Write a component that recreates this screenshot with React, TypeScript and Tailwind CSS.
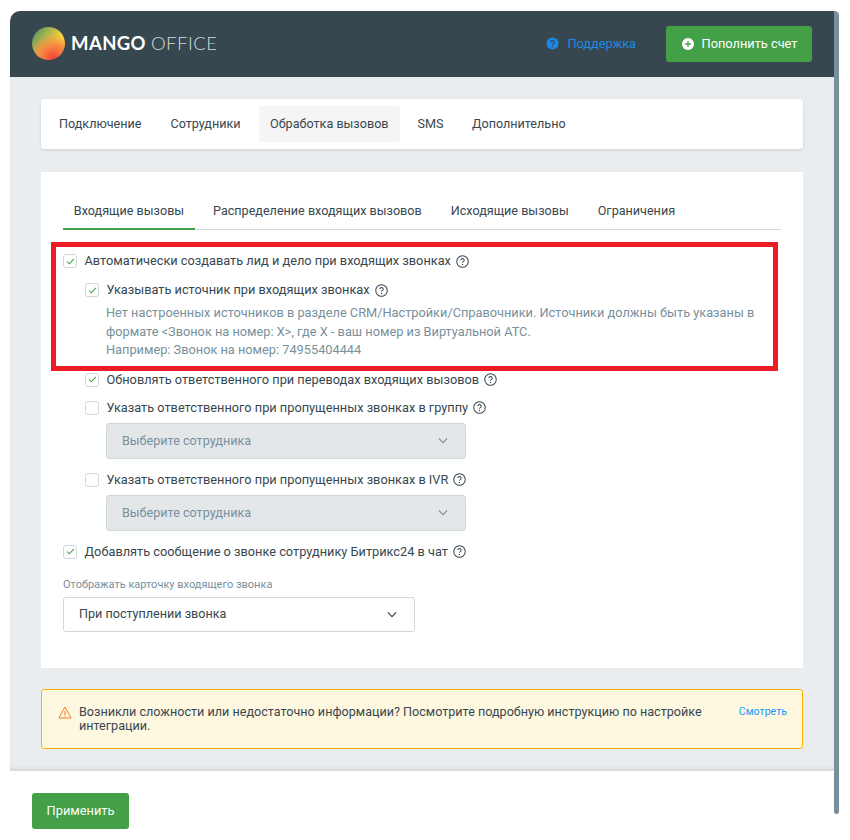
import React from 'react'

const font = "font-['Roboto',sans-serif]"

const Help = () => (
  <svg viewBox="0 0 14 14" className="w-[13px] h-[13px] ml-[5px] shrink-0 text-[#37474f]" fill="none">
    <circle cx="7" cy="7" r="6.2" stroke="currentColor" strokeWidth="1.1" />
    <path d="M5.2 5.5a1.8 1.8 0 1 1 2.7 1.6c-.6.35-.9.7-.9 1.3" stroke="currentColor" strokeWidth="1.1" />
    <circle cx="7" cy="10.2" r=".75" fill="currentColor" />
  </svg>
)

const Check = ({ on }: { on: boolean }) => (
  <span className="w-[14px] h-[14px] shrink-0 rounded-[3px] border border-[#cfd8dc] bg-white flex items-center justify-center">
    {on && (
      <svg viewBox="0 0 10 8" className="w-[9px] h-[7px]" fill="none">
        <path d="M1 4l2.6 2.6L9 1" stroke="#43a047" strokeWidth="1.2" />
      </svg>
    )}
  </span>
)

const Chevron = () => (
  <svg viewBox="0 0 12 8" className="w-[10px] h-[7px]" fill="none">
    <path d="M1 1.5l5 5 5-5" stroke="currentColor" strokeWidth="1.4" />
  </svg>
)

const Option = ({ on, label, className }: { on: boolean; label: string; className?: string }) => (
  <div className={`flex items-center h-[16px] ${className ?? ''}`}>
    <Check on={on} />
    <span className="ml-[7.5px] text-[12.78px] leading-4 text-[#37474f] whitespace-nowrap">{label}</span>
    <Help />
  </div>
)

const DisabledSelect = () => (
  <div className="ml-[43px] mt-[7px] w-[360px] h-[36px] rounded-[3px] border border-[#cfd8dc] bg-[#e4e7ea] flex items-center justify-between pl-[15px] pr-[17px] text-[12.6px] text-[#78909c]">
    <span className="mt-[2px]">Выберите сотрудника</span>
    <Chevron />
  </div>
)

export default function App() {
  return (
    <div className={`${font} relative w-[850px] h-[840px] bg-white overflow-hidden pl-[10px] pt-[11px] flex items-start`}>
      <div className="w-[824px] shrink-0">
        <header className="h-[66px] bg-[#37474f] rounded-tl-[10px] flex items-center pl-[22px] pr-[22px]">
          <div className="flex items-center -mt-[2px]">
            <span className="w-[33px] h-[33px] rounded-full bg-[radial-gradient(circle_at_65%_95%,#f44336_0%,#f58a42_35%,transparent_65%),linear-gradient(125deg,#6f9d5a_15%,#ffd83d_65%)]" />
            <span className="ml-[6px] text-[18.5px] leading-none tracking-[0.4px] font-['Lato',sans-serif] font-bold text-white">MANGO</span>
            <span className="ml-[5px] text-[18.5px] leading-none tracking-[0.5px] font-['Lato',sans-serif] font-light text-[#d5dadc]">OFFICE</span>
          </div>
          <div className="ml-auto flex items-center text-[12.7px] text-[#1e88e5]">
            <svg viewBox="0 0 14 14" className="w-[13px] h-[13px]">
              <circle cx="7" cy="7" r="6.5" fill="#1e88e5" />
              <path d="M5.2 5.5a1.8 1.8 0 1 1 2.7 1.6c-.6.35-.9.7-.9 1.3" fill="none" stroke="#37474f" strokeWidth="1.3" />
              <circle cx="7" cy="10.4" r=".8" fill="#37474f" />
            </svg>
            <span className="ml-[8px]">Поддержка</span>
          </div>
          <button className="ml-[30px] w-[146px] h-[36px] rounded-[3px] bg-[#43a047] pl-[1px] flex items-center justify-center text-[12.8px] text-white">
            <svg viewBox="0 0 14 14" className="w-[12px] h-[12px] mr-[8px]">
              <circle cx="7" cy="7" r="7" fill="#fff" />
              <path d="M7 3.8v6.4M3.8 7h6.4" stroke="#43a047" strokeWidth="1.6" />
            </svg>
            Пополнить счет
          </button>
        </header>

        <main className="relative h-[694px] bg-[#eaedf0] px-[31px] pt-[22px] shadow-[inset_0_-4px_4px_-2px_rgba(0,0,0,0.1)]">
          <nav className="h-[50px] bg-white rounded-[3px] shadow-[0_1px_3px_rgba(0,0,0,0.12)] flex items-center pl-[8px] text-[12.6px] text-[#37474f]">
            <span className="px-[10px] h-[36px] flex items-center">Подключение</span>
            <span className="ml-[9px] px-[10px] h-[36px] flex items-center">Сотрудники</span>
            <span className="ml-[8.5px] px-[11px] h-[36px] flex items-center rounded-[3px] bg-[#f5f5f5]">Обработка вызовов</span>
            <span className="ml-[8px] px-[10px] h-[36px] flex items-center">SMS</span>
            <span className="ml-[8.5px] px-[10px] h-[36px] flex items-center">Дополнительно</span>
          </nav>

          <section className="mt-[23px] h-[496px] bg-white pt-[22px] px-[22px]">
            <div className="flex h-[36px] border-b border-[#cfd8dc] text-[12.6px] text-[#37474f]">
              <span className="w-[132px] -mb-px border-b-2 border-[#43a047] flex items-center justify-center">Входящие вызовы</span>
              <span className="ml-[18px] flex items-center">Распределение входящих вызовов</span>
              <span className="ml-[29px] flex items-center">Исходящие вызовы</span>
              <span className="ml-[29px] flex items-center">Ограничения</span>
            </div>

            <Option on label="Автоматически создавать лид и дело при входящих звонках" className="mt-[23px]" />
            <Option on label="Указывать источник при входящих звонках" className="mt-[13px] ml-[22px]" />
            <p className="ml-[43px] mt-[6px] text-[12.78px] leading-[18.5px] text-[#78909c] w-[670px]">
              Нет настроенных источников в разделе CRM/Настройки/Справочники. Источники должны быть указаны в формате &lt;Звонок на номер: X&gt;, где X - ваш номер из Виртуальной АТС.
              <br />
              Например: Звонок на номер: 74955404444
            </p>
            <Option on label="Обновлять ответственного при переводах входящих вызовов" className="mt-[12px] ml-[22px]" />
            <Option on={false} label="Указать ответственного при пропущенных звонках в группу" className="mt-[12px] ml-[22px]" />
            <DisabledSelect />
            <Option on={false} label="Указать ответственного при пропущенных звонках в IVR" className="mt-[13px] ml-[22px]" />
            <DisabledSelect />
            <Option on label="Добавлять сообщение о звонке сотруднику Битрикс24 в чат" className="mt-[13px]" />

            <div className="mt-[18px] text-[11px] leading-[14px] text-[#78909c]">Отображать карточку входящего звонка</div>
            <div className="mt-[5px] w-[352px] h-[35px] rounded-[3px] border border-[#cfd8dc] bg-white flex items-center justify-between pl-[15px] pr-[17px] text-[12.6px] text-[#37474f]">
              <span>При поступлении звонка</span>
              <Chevron />
            </div>
          </section>

          <div className="mt-[21px] h-[60px] rounded-[3px] border border-[#ffb300] bg-[#fff8e1] flex items-start pl-[16px] pr-[15px] pt-[15px]">
            <svg viewBox="0 0 14 13" className="w-[14px] h-[13px] mt-[1px] shrink-0" fill="none">
              <path d="M7 1L.9 12h12.2L7 1z" stroke="#f4792b" strokeWidth="1" />
              <path d="M7 5v4" stroke="#f4792b" strokeWidth="1.1" />
              <circle cx="7" cy="10.2" r=".6" fill="#f4792b" />
            </svg>
            <p className="ml-[7px] w-[640px] text-[12.6px] leading-[14px] text-[#37474f]">
              Возникли сложности или недостаточно информации? Посмотрите подробную инструкцию по настройке интеграции.
            </p>
            <a className="ml-auto text-[10.6px] leading-[14px] text-[#2196f3]">Смотреть</a>
          </div>

          {/* red annotation frame drawn over the form */}
          <div className="absolute left-[41px] top-[165px] w-[727px] h-[129px] border-[5px] border-[#ed1c24] pointer-events-none" />
        </main>

        <footer className="h-[69px] bg-white pl-[22px] pt-[22px]">
          <button className="w-[97px] h-[36px] rounded-[3px] bg-[#43a047] text-[12.8px] text-white">Применить</button>
        </footer>
      </div>
      {/* scrollbar */}
      <div className="w-[5px] h-[803px] shrink-0 bg-[#78909c] rounded-b-[3px] rounded-tr-[5px]" />
    </div>
  )
}
